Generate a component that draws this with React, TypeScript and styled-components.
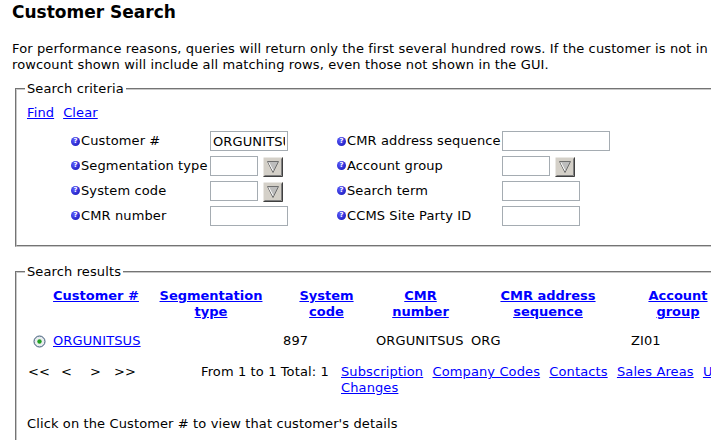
import { Fragment } from "react"
import styled, { createGlobalStyle } from "styled-components"

const GlobalStyle = createGlobalStyle`
    html, body {
        margin: 0;
        padding: 0;
        overflow: hidden;
        background: #ffffff;
    }
    body {
        font-family: "DejaVu Sans", Verdana, sans-serif;
        font-size: 13px;
        line-height: 16px;
        letter-spacing: 0.12px;
        color: #000000;
    }
`

const Page = styled.div`
    width: 1000px;
    padding: 2px 0 0 12px;
    box-sizing: border-box;
`
const Title = styled.h1`
    margin: 0;
    font-size: 17px;
    line-height: 20px;
    font-weight: bold;
    letter-spacing: 0;
`
const Intro = styled.div`
    margin-top: 19px;
    white-space: nowrap;
`
const Box = styled.fieldset<{ gap: number }>`
    margin: ${props => props.gap}px 0 0 3px;
    padding: 8px 10px 17px 10px;
    border: 2px groove #c8c8c8;
    width: 940px;
    box-sizing: border-box;
`
const Legend = styled.legend`
    padding: 0 2px;
    margin-left: -2px;
    line-height: 16px;
`
const Link = styled.a<{ bold?: boolean }>`
    color: #0000ff;
    text-decoration: underline;
    cursor: pointer;
    font-weight: ${props => props.bold ? "bold" : "normal"};
    letter-spacing: ${props => props.bold ? "0" : "0.12px"};
`
const ActionRow = styled.div`
    display: flex;
    gap: 9px;
`
const CriteriaGrid = styled.div`
    display: grid;
    grid-template-columns: 139px 127px 165px 200px;
    grid-template-rows: 24px 25px 25px 25px;
    margin: 8px 0 0 44px;
    align-items: center;
`
const Label = styled.div`
    display: flex;
    align-items: center;
    white-space: nowrap;
`
const Help = styled.span`
    display: inline-flex;
    align-items: center;
    justify-content: center;
    width: 9px;
    height: 9px;
    border-radius: 50%;
    background: radial-gradient(circle at 35% 35%, #5a5aff, #1010b0);
    color: #ffffff;
    font-size: 7px;
    line-height: 9px;
    font-weight: bold;
    letter-spacing: 0;
    margin-right: 1px;
`
const FieldCell = styled.div`
    display: flex;
    align-items: center;
    gap: 5px;
`
const TextBox = styled.input<{ size_px: number }>`
    width: ${props => props.size_px}px;
    height: 20px;
    box-sizing: border-box;
    border: 1px solid #a5acb2;
    padding: 0 2px;
    font-family: "DejaVu Sans", Verdana, sans-serif;
    font-size: 13px;
    letter-spacing: 0.12px;
    color: #000000;
    outline: none;
`
const DropBtn = styled.span`
    display: inline-block;
    width: 20px;
    height: 20px;
    margin-top: 2px;
`
const ResultsGrid = styled.div`
    display: grid;
    grid-template-columns: 23px 92px 138px 93px 95px 160px 100px 120px;
`
const HeadCell = styled.div`
    text-align: center;
    font-weight: bold;
    line-height: 16px;
`
const DataCell = styled.div`
    margin-top: 13px;
    padding-left: 3px;
    white-space: nowrap;
    display: flex;
    align-items: center;
    height: 16px;
`
const RadioCell = styled.div`
    margin-top: 13px;
    display: flex;
    align-items: center;
    justify-content: center;
    height: 16px;
    padding-left: 1px;
`
const PagerRow = styled.div`
    display: grid;
    grid-template-columns: 174px 140px 430px;
    margin-top: 15px;
`
const Arrows = styled.div`
    display: grid;
    grid-template-columns: 33px 29px 24px 30px;
    padding-left: 1px;
`
const Total = styled.div`
    white-space: nowrap;
`
const LinkList = styled.div`
    line-height: 16px;
`
const ListLink = styled(Link)`
    margin-right: 5px;
`
const Footer = styled.div`
    margin-top: 20px;
`

function HelpLabel({ text }: { text: string }) {
    return (
        <Label><Help>?</Help>{text}</Label>
    )
}

function DropArrow() {
    return (
        <DropBtn>
            <svg width="20" height="20" viewBox="0 0 20 20">
                <rect x="0" y="0" width="20" height="20" fill="#d4d0c8" />
                <path d="M0 19.5 L0 0 L19.5 0" stroke="#ffffff" strokeWidth="1" fill="none" />
                <path d="M0.5 19.5 L19.5 19.5 L19.5 0.5" stroke="#404040" strokeWidth="1" fill="none" />
                <path d="M1.5 18.5 L18.5 18.5 L18.5 1.5" stroke="#808080" strokeWidth="1" fill="none" />
                <polygon points="4.5,4.5 15.5,4.5 10,15.5" fill="#bdbdbd" stroke="#6e6e6e" strokeWidth="1" />
                <path d="M5.8 5.5 L10 13.6" stroke="#ffffff" strokeWidth="1" />
            </svg>
        </DropBtn>
    )
}

function Radio() {
    return (
        <svg width="13" height="13" viewBox="0 0 13 13">
            <defs>
                <radialGradient id="rg" cx="50%" cy="50%" r="60%">
                    <stop offset="0%" stopColor="#ffffff" />
                    <stop offset="100%" stopColor="#d8dde2" />
                </radialGradient>
            </defs>
            <circle cx="6.5" cy="6.5" r="5.5" fill="url(#rg)" stroke="#3d5a78" strokeWidth="1" />
            <circle cx="6.5" cy="6.5" r="2.2" fill="#22a022" />
        </svg>
    )
}

const headers = [
    ["Customer #"],
    ["Segmentation", "type"],
    ["System", "code"],
    ["CMR", "number"],
    ["CMR address", "sequence"],
    ["Account", "group"],
    ["Customer", "name"],
]

const moreLinks = ["Subscription", "Company Codes", "Contacts", "Sales Areas", "Usage Changes"]

export default function App() {
    return (
        <Page>
            <GlobalStyle />
            <Title>Customer Search</Title>
            <Intro>
                <div>For performance reasons, queries will return only the first several hundred rows. If the customer is not in the list, refine the search. The</div>
                <div>rowcount shown will include all matching rows, even those not shown in the GUI.</div>
            </Intro>

            <Box gap={8}>
                <Legend>Search criteria</Legend>
                <ActionRow>
                    <Link>Find</Link>
                    <Link>Clear</Link>
                </ActionRow>
                <CriteriaGrid>
                    <HelpLabel text="Customer #" />
                    <FieldCell><TextBox size_px={78} defaultValue="ORGUNITSUS" /></FieldCell>
                    <HelpLabel text="CMR address sequence" />
                    <FieldCell><TextBox size_px={108} /></FieldCell>

                    <HelpLabel text="Segmentation type" />
                    <FieldCell><TextBox size_px={48} /><DropArrow /></FieldCell>
                    <HelpLabel text="Account group" />
                    <FieldCell><TextBox size_px={48} /><DropArrow /></FieldCell>

                    <HelpLabel text="System code" />
                    <FieldCell><TextBox size_px={48} /><DropArrow /></FieldCell>
                    <HelpLabel text="Search term" />
                    <FieldCell><TextBox size_px={78} /></FieldCell>

                    <HelpLabel text="CMR number" />
                    <FieldCell><TextBox size_px={78} /></FieldCell>
                    <HelpLabel text="CCMS Site Party ID" />
                    <FieldCell><TextBox size_px={78} /></FieldCell>
                </CriteriaGrid>
            </Box>

            <Box gap={17}>
                <Legend>Search results</Legend>
                <ResultsGrid>
                    <HeadCell />
                    {headers.map((h, index) => (
                        <HeadCell key={index}>
                            {h.map((line, i) => (
                                <div key={i}><Link bold>{line}</Link></div>
                            ))}
                        </HeadCell>
                    ))}
                    <RadioCell><Radio /></RadioCell>
                    <DataCell><Link>ORGUNITSUS</Link></DataCell>
                    <DataCell />
                    <DataCell>897</DataCell>
                    <DataCell>ORGUNITSUS</DataCell>
                    <DataCell>ORG</DataCell>
                    <DataCell>ZI01</DataCell>
                    <DataCell />
                </ResultsGrid>
                <PagerRow>
                    <Arrows>
                        <span>&lt;&lt;</span>
                        <span>&lt;</span>
                        <span>&gt;</span>
                        <span>&gt;&gt;</span>
                    </Arrows>
                    <Total>From 1 to 1 Total: 1</Total>
                    <LinkList>
                        {moreLinks.map((l, index) => (
                            <Fragment key={index}><ListLink>{l}</ListLink>{" "}</Fragment>
                        ))}
                    </LinkList>
                </PagerRow>
                <Footer>Click on the Customer # to view that customer's details</Footer>
            </Box>
        </Page>
    )
}
